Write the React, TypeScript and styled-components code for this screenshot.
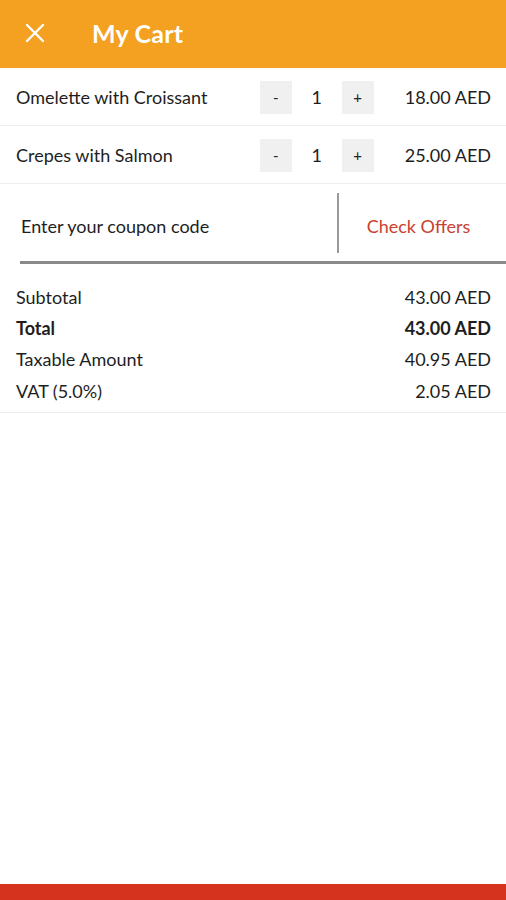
import styled, { createGlobalStyle } from 'styled-components';

const GlobalStyle = createGlobalStyle`
  html, body {
    margin: 0;
    padding: 0;
    background: #fff;
  }
  body {
    font-family: Lato, "Open Sans", sans-serif;
    color: #1e1e1e;
  }
`;

const items = [
  { name: 'Omelette with Croissant', qty: 1, price: '18.00 AED' },
  { name: 'Crepes with Salmon', qty: 1, price: '25.00 AED' },
];

const totals = [
  { label: 'Subtotal', value: '43.00 AED' },
  { label: 'Total', value: '43.00 AED', bold: true },
  { label: 'Taxable Amount', value: '40.95 AED' },
  { label: 'VAT (5.0%)', value: '2.05 AED' },
];

export default function App() {
  return (
    <Page>
      <GlobalStyle />
      <Header>
        <CloseButton aria-label="close">
          <svg width="20" height="20" viewBox="0 0 20 20">
            <path d="M2 2 L18 18 M18 2 L2 18" stroke="#fff" strokeWidth="2.4" strokeLinecap="round" />
          </svg>
        </CloseButton>
        <Title>My Cart</Title>
      </Header>

      {items.map(item => (
        <ItemRow key={item.name}>
          <ItemName>{item.name}</ItemName>
          <Stepper>
            <StepButton>-</StepButton>
            <Qty>{item.qty}</Qty>
            <StepButton>+</StepButton>
          </Stepper>
          <Price>{item.price}</Price>
        </ItemRow>
      ))}

      <Coupon>
        <CouponInput placeholder="Enter your coupon code" />
        <Divider />
        <OffersLink>Check Offers</OffersLink>
      </Coupon>

      <Summary>
        {totals.map(t => (
          <SummaryRow key={t.label} $bold={t.bold}>
            <span>{t.label}</span>
            <span>{t.value}</span>
          </SummaryRow>
        ))}
      </Summary>

      <Spacer />
      <BottomBar />
    </Page>
  );
}

const Page = styled.div`
  display: flex;
  flex-direction: column;
  height: 900px;
  width: 506px;
`;

const Header = styled.header`
  display: flex;
  align-items: center;
  height: 68px;
  background: #f4a021;
  padding-left: 25px;
  padding-bottom: 3px;
  box-sizing: border-box;
`;

const CloseButton = styled.button`
  display: flex;
  align-items: center;
  justify-content: center;
  padding: 0;
  border: none;
  background: none;
  width: 20px;
  height: 20px;
`;

const Title = styled.h1`
  margin: 0 0 0 47px;
  font-family: Lato, sans-serif;
  font-weight: 700;
  font-size: 25px;
  color: #fff;
  letter-spacing: 0.2px;
`;

const ItemRow = styled.div`
  display: flex;
  align-items: center;
  height: 56px;
  padding: 1px 15px 0 16px;
  border-bottom: 1px solid #efefef;
`;

const ItemName = styled.span`
  flex: 1;
  font-size: 18px;
`;

const Stepper = styled.div`
  display: flex;
  align-items: center;
  margin-right: 31px;
`;

const StepButton = styled.button`
  width: 32px;
  height: 33px;
  border: none;
  background: #f0f0f0;
  font-family: Lato, sans-serif;
  font-size: 15px;
  color: #222;
  padding: 0;
`;

const Qty = styled.span`
  width: 50px;
  text-align: center;
  font-size: 18px;
`;

const Price = styled.span`
  font-size: 18px;
  text-align: right;
`;

const Coupon = styled.div`
  display: flex;
  align-items: center;
  height: 77px;
  margin: 0 0 0 20px;
  border-bottom: 3px solid #8a8a8a;
`;

const CouponInput = styled.input`
  flex: 1;
  border: none;
  outline: none;
  font-family: Lato, sans-serif;
  font-size: 18px;
  padding: 6px 0 0 1px;
  background: transparent;
  &::placeholder {
    color: #1e1e1e;
  }
`;

const Divider = styled.div`
  width: 2px;
  height: 60px;
  background: #9a9a9a;
`;

const OffersLink = styled.span`
  width: 159px;
  padding: 6px 8px 0 0;
  text-align: center;
  color: #c9412f;
  font-size: 18px;
`;

const Summary = styled.div`
  display: flex;
  flex-direction: column;
  padding: 17px 15px 5px 16px;
  border-bottom: 1px solid #ececec;
`;

const SummaryRow = styled.div<{ $bold?: boolean }>`
  display: flex;
  justify-content: space-between;
  height: 31.4px;
  align-items: center;
  font-size: 18px;
  font-weight: ${p => (p.$bold ? 700 : 400)};
`;

const Spacer = styled.div`
  flex: 1;
`;

const BottomBar = styled.div`
  height: 16px;
  background: #d5331e;
`;
